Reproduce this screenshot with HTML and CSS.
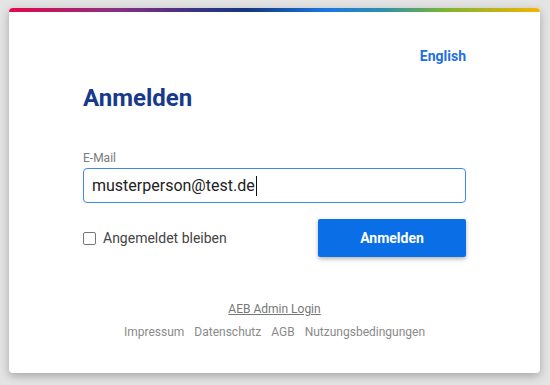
FILE: index.html
```html
<!DOCTYPE html>
<html lang="de">
<head>
<meta charset="utf-8">
<title>Anmelden</title>
<link rel="stylesheet" href="styles.css">
</head>
<body>
<div class="card">
  <div class="rainbow"></div>
  <div class="content">
    <div class="lang-row"><a class="lang" href="#">English</a></div>
    <h1 class="title">Anmelden</h1>
    <label class="field-label" for="email">E-Mail</label>
    <div class="input"><span class="input-text">musterperson@test.de</span><span class="caret"></span></div>
    <div class="actions">
      <label class="remember"><span class="checkbox"></span><span>Angemeldet bleiben</span></label>
      <button class="submit">Anmelden</button>
    </div>
    <div class="admin"><a href="#">AEB Admin Login</a></div>
    <nav class="footer">
      <a href="#">Impressum</a>
      <a href="#">Datenschutz</a>
      <a href="#">AGB</a>
      <a href="#">Nutzungsbedingungen</a>
    </nav>
  </div>
</div>
</body>
</html>
```
FILE: styles.css
```css
* { box-sizing: border-box; }
html, body { margin: 0; padding: 0; }
body {
  width: 550px;
  height: 385px;
  background: #e4e4e4;
  font-family: Roboto, "Liberation Sans", sans-serif;
  padding: 8px 10px 0 9px;
  overflow: hidden;
}
.card {
  width: 531px;
  height: 365px;
  background: #fff;
  border-radius: 4px;
  overflow: hidden;
  box-shadow: 0 3px 10px rgba(0,0,0,0.28);
}
.rainbow {
  height: 4px;
  background: linear-gradient(90deg, #e4084a 0%, #8a2f82 20%, #2d3383 38%, #12387f 45%, #1a78e3 60%, #2a8fb0 70%, #7cb433 82%, #f5b400 100%);
}
.content {
  display: flex;
  flex-direction: column;
  padding: 0 74px 0 74px;
}
.lang-row {
  display: flex;
  justify-content: flex-end;
  margin-top: 34px;
  line-height: 20px;
}
.lang {
  color: #1f6fe0;
  font-weight: 700;
  font-size: 14px;
  text-decoration: none;
}
.title {
  margin: 16px 0 0 0;
  font-size: 24px;
  line-height: 32px;
  font-weight: 700;
  color: #173a8a;
}
.field-label {
  margin-top: 36px;
  font-size: 12px;
  line-height: 16px;
  color: #7a7a7a;
}
.input {
  margin-top: 2px;
  height: 35px;
  border: 1px solid #3f8ae6;
  border-radius: 4px;
  display: flex;
  align-items: center;
  padding-left: 8px;
  font-size: 16px;
  color: #222;
}
.caret {
  width: 1px;
  height: 20px;
  background: #111;
  margin-left: 1px;
}
.actions {
  margin-top: 16px;
  display: flex;
  justify-content: space-between;
  align-items: center;
}
.remember {
  display: flex;
  align-items: center;
  gap: 7px;
  font-size: 14px;
  color: #444;
}
.checkbox {
  width: 13px;
  height: 13px;
  border: 1px solid #767676;
  border-radius: 2px;
  background: #fff;
}
.submit {
  width: 148px;
  height: 38px;
  border: none;
  border-radius: 2px;
  background: #0a6fe6;
  color: #fff;
  font-family: Roboto, "Liberation Sans", sans-serif;
  font-weight: 700;
  font-size: 14px;
  box-shadow: 0 2px 4px rgba(0,0,0,0.3);
}
.admin {
  margin-top: 44px;
  text-align: center;
  font-size: 12px;
  line-height: 16px;
}
.admin a { color: #777; }
.footer {
  margin-top: 7px;
  display: flex;
  justify-content: center;
  gap: 10px;
  font-size: 12px;
  line-height: 16px;
}
.footer a { color: #8a8a8a; text-decoration: none; }
```
